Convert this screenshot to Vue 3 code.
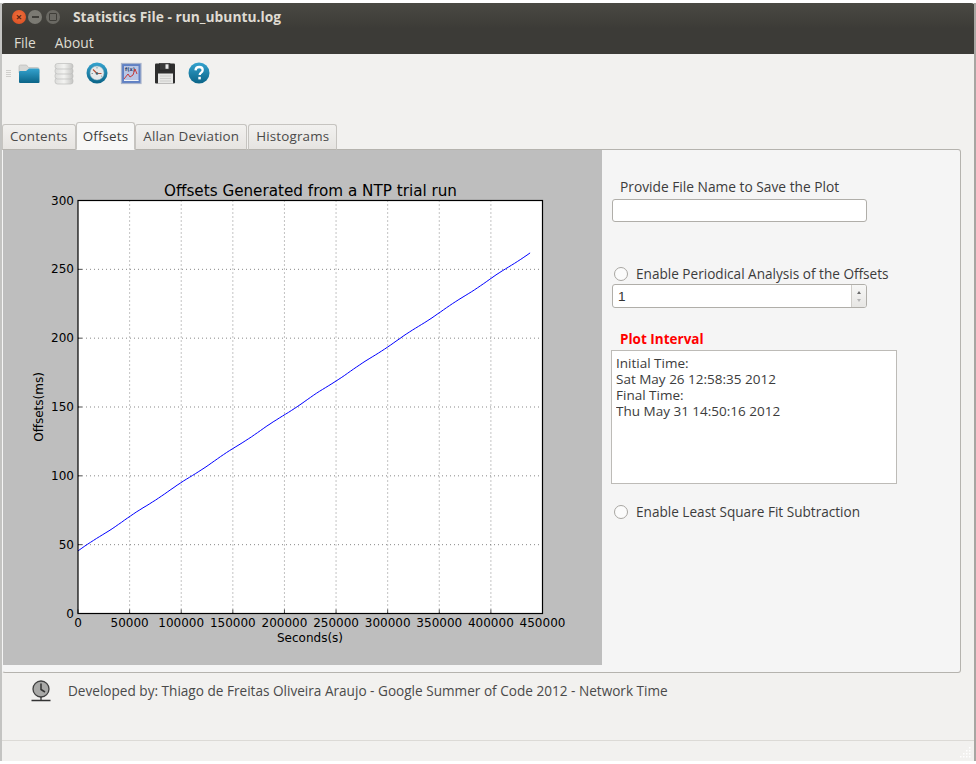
<template>
  <div class="window">
    <header class="titlebar">
      <div class="title-row">
        <div class="controls">
          <span class="ctl ctl-close">×</span>
          <span class="ctl ctl-min"><i class="dash"></i></span>
          <span class="ctl ctl-max"><i class="box"></i></span>
        </div>
        <div class="title">Statistics File - run_ubuntu.log</div>
      </div>
      <nav class="menu">
        <span class="menu-item">File</span>
        <span class="menu-item">About</span>
      </nav>
    </header>

    <div class="toolbar">
      <span class="grip"><i></i><i></i><i></i><i></i></span>
      <!-- folder -->
      <svg class="tool" width="24" height="24" viewBox="0 0 24 24">
        <defs>
          <linearGradient id="blue" x1="0" y1="0" x2="0" y2="1">
            <stop offset="0" stop-color="#35a3cf" />
            <stop offset="1" stop-color="#0b6487" />
          </linearGradient>
          <linearGradient id="silver" x1="0" y1="0" x2="1" y2="0">
            <stop offset="0" stop-color="#dcdcda" />
            <stop offset="0.5" stop-color="#f3f3f1" />
            <stop offset="1" stop-color="#c4c4c2" />
          </linearGradient>
        </defs>
        <path d="M2 5.500q0-1.500 1.500-1.500h6l2 2.500h9q1.500 0 1.500 1.500v4H2z" fill="#d8d8d6" stroke="#b5b5b3" stroke-width="0.6" />
        <path d="M2 11q0-1 1-1h6l3-2.500h9q1.500 0 1.500 1.500v12q0 1-1 1H3q-1 0-1-1z" fill="url(#blue)" />
      </svg>
      <!-- database -->
      <svg class="tool" width="24" height="24" viewBox="0 0 24 24">
        <g fill="url(#silver)" stroke="#bdbdbb" stroke-width="0.7">
          <rect x="4" y="17" width="18" height="6" rx="2.500" />
          <rect x="4" y="12" width="18" height="6" rx="2.500" />
          <rect x="4" y="7" width="18" height="6" rx="2.500" />
          <rect x="4" y="2.500" width="18" height="5.500" rx="2.500" />
        </g>
      </svg>
      <!-- clock -->
      <svg class="tool" width="24" height="24" viewBox="0 0 24 24">
        <circle cx="12" cy="12" r="10.500" fill="url(#blue)" />
        <circle cx="12" cy="12" r="7" fill="#e6e9ea" stroke="#8fb0bd" stroke-width="0.5" />
        <path d="M12 12.500L8 8.500M12 12.500h4.500" stroke="#b5533a" stroke-width="1.200" fill="none" />
        <circle cx="12" cy="12.500" r="1.300" fill="#44606c" />
        <path d="M12 6v1.500M6.500 12.500H8M17 15.500l-1-.7" stroke="#6f8791" stroke-width="0.8" />
      </svg>
      <!-- function plot -->
      <svg class="tool" width="24" height="24" viewBox="0 0 24 24">
        <rect x="2.500" y="2.500" width="19.500" height="20" fill="#5f80c4" stroke="#a9b4cb" stroke-width="1.200" />
        <rect x="5" y="5" width="14.500" height="15" fill="#b9c6e4" />
        <text x="6" y="10" class="fx">f(x)</text>
        <path d="M5 18l4-5 2 3 3-2 2-6 2 5" fill="none" stroke="#c73a3a" stroke-width="1" />
        <path d="M5 19.500h14.500" stroke="#f2f4f8" stroke-width="1" />
      </svg>
      <!-- floppy -->
      <svg class="tool" width="24" height="24" viewBox="0 0 24 24">
        <path d="M2 3.500q0-1 1-1h18q1 0 1 1v18q0 1-1 1H3q-1 0-1-1z" fill="#2e2e2e" />
        <rect x="6.500" y="2.500" width="10.500" height="6.500" fill="#3b3b3b" stroke="#222" stroke-width="0.4" />
        <rect x="12.500" y="3.300" width="3" height="4.500" fill="#e9e9e9" />
        <rect x="5" y="12.500" width="15" height="10" fill="#e7e7e5" />
        <path d="M7 15h11M7 17.500h11M7 20h11" stroke="#bdbdbb" stroke-width="0.6" />
      </svg>
      <!-- help -->
      <svg class="tool" width="24" height="24" viewBox="0 0 24 24">
        <circle cx="12" cy="12" r="10.500" fill="url(#blue)" />
        <path d="M8.500 9.300q.3-3.300 3.700-3.300 3.500 0 3.500 3 0 1.700-1.700 2.700-1.300.8-1.300 2.300" fill="none" stroke="#fff" stroke-width="2.300" />
        <rect x="11.300" y="15.800" width="2.500" height="2.600" fill="#fff" />
      </svg>
    </div>

    <div class="tabs">
      <div class="tab">Contents</div>
      <div class="tab active">Offsets</div>
      <div class="tab">Allan Deviation</div>
      <div class="tab">Histograms</div>
    </div>

    <section class="panel">
      <div class="plot">
        <svg class="chart" width="599" height="515" viewBox="0 0 599 515">
          <rect x="75" y="50.500" width="464.500" height="413" fill="#fff" />
          <g class="grid">
            <line v-for="t in xTicks.slice(1, -1)" :key="'gx' + t.label" :x1="t.x" :x2="t.x" y1="50.500" y2="463.500" />
            <line v-for="t in yTicks.slice(1, -1)" :key="'gy' + t.label" x1="75" x2="539.500" :y1="t.y" :y2="t.y" />
          </g>
          <polyline class="series" :points="seriesPoints" />
          <rect x="75" y="50.500" width="464.500" height="413" fill="none" stroke="#000" stroke-width="1.200" />
          <g class="ticks">
            <line v-for="t in xTicks" :key="'tx' + t.label" :x1="t.x" :x2="t.x" y1="463.500" y2="459.500" />
            <line v-for="t in yTicks" :key="'ty' + t.label" x1="75" x2="79" :y1="t.y" :y2="t.y" />
          </g>
          <text v-for="t in xTicks" :key="'lx' + t.label" :x="t.x" y="477" text-anchor="middle" class="tick-label">{{ t.label }}</text>
          <text v-for="t in yTicks" :key="'ly' + t.label" x="71" :y="t.y + 4" text-anchor="end" class="tick-label">{{ t.label }}</text>
          <text x="307.500" y="46" text-anchor="middle" class="chart-title">Offsets Generated from a NTP trial run</text>
          <text x="307" y="492" text-anchor="middle" class="tick-label">Seconds(s)</text>
          <text transform="translate(40 257) rotate(-90)" text-anchor="middle" class="tick-label">Offsets(ms)</text>
        </svg>
      </div>

      <div class="side">
        <div class="side-label file-label">Provide File Name to Save the Plot</div>
        <div class="field"></div>

        <label class="radio-row periodic">
          <span class="radio"></span>
          <span>Enable Periodical Analysis of the Offsets</span>
        </label>
        <div class="spin">
          <span class="spin-value">1</span>
          <span class="spin-btns">
            <i class="arrow up"></i>
            <i class="arrow down"></i>
          </span>
        </div>

        <div class="side-label red">Plot Interval</div>
        <div class="interval">
          <div v-for="line in intervalLines" :key="line" class="interval-line">{{ line }}</div>
        </div>

        <label class="radio-row least">
          <span class="radio"></span>
          <span>Enable Least Square Fit Subtraction</span>
        </label>
      </div>
    </section>

    <footer class="credits">
      <svg class="credit-icon" width="22" height="22" viewBox="0 0 22 22">
        <circle cx="11" cy="9" r="8" fill="#a9a9a7" stroke="#3f3f3f" stroke-width="1.300" />
        <path d="M11 3.500V9.500l4 2.500" fill="none" stroke="#333" stroke-width="1.500" />
        <path d="M11 17v3M1.500 20.500h19" stroke="#333" stroke-width="1.300" />
      </svg>
      <span>Developed by: Thiago de Freitas Oliveira Araujo - Google Summer of Code 2012 - Network Time</span>
    </footer>

    <div class="statusbar">
      <svg class="resize" width="12" height="12" viewBox="0 0 12 12">
        <g fill="#fff">
          <rect v-for="d in resizeDots" :key="d.x + '-' + d.y" :x="d.x" :y="d.y" width="1.500" height="1.500" />
        </g>
      </svg>
    </div>
  </div>
</template>

<script setup>
import { computed } from 'vue';

// Plot scale: axes box inside the grey area
const left = 75;
const bottom = 463.5;
const pxPerSecond = 464.5 / 450000;
const pxPerMs = 413 / 300;

const xTicks = Array.from({ length: 10 }, (_, i) => ({
  x: left + i * 50000 * pxPerSecond,
  label: String(i * 50000)
}));

const yTicks = Array.from({ length: 7 }, (_, i) => ({
  y: bottom - i * 50 * pxPerMs,
  label: String(i * 50)
}));

const seriesPoints = computed(() => {
  const points = [];
  for (let s = 0; s <= 438000; s += 3000) {
    const wobble = Math.sin(s / 7000) * 0.25;
    const ms = 45.5 + (s / 438000) * 216.5 + wobble;
    points.push(`${(left + s * pxPerSecond).toFixed(1)},${(bottom - ms * pxPerMs).toFixed(1)}`);
  }
  return points.join(' ');
});

const intervalLines = [
  'Initial Time:',
  'Sat May 26 12:58:35 2012',
  'Final Time:',
  'Thu May 31 14:50:16 2012'
];

const resizeDots = [
  { x: 9, y: 0 }, { x: 9, y: 3 }, { x: 6, y: 3 }, { x: 9, y: 6 },
  { x: 6, y: 6 }, { x: 3, y: 6 }, { x: 9, y: 9 }, { x: 6, y: 9 },
  { x: 3, y: 9 }, { x: 0, y: 9 }
];
</script>

<style scoped>
.window {
  box-sizing: border-box;
  width: 976px;
  height: 758px;
  margin-top: 3px;
  display: flex;
  flex-direction: column;
  background: #f2f1ef;
  border-left: 2px solid #c4c4c2;
  border-right: 2px solid #a8a6a2;
  font-family: "Open Sans", "Noto Sans", sans-serif;
  font-size: 13.6px;
  color: #3c3c3c;
  overflow: hidden;
}

.titlebar {
  height: 51px;
  flex: none;
  margin-left: -2px;
  margin-right: -2px;
  background: linear-gradient(#4a4943, #3c3b37 50%);
  border-radius: 5px 5px 0 0;
}

.title-row {
  height: 27px;
  display: flex;
  align-items: center;
}

.controls {
  display: flex;
  align-items: center;
  width: 73px;
  padding-left: 12px;
  box-sizing: border-box;
  gap: 2px;
}

.ctl {
  width: 14px;
  height: 14px;
  border-radius: 50%;
  display: flex;
  align-items: center;
  justify-content: center;
  font-size: 11px;
  line-height: 1;
  font-weight: 700;
}

.ctl-close {
  background: radial-gradient(circle at 50% 40%, #f0703d, #d84a1f);
  color: #5e2510;
}

.ctl-min {
  background: #7b7a73;
}

.ctl-max {
  background: #6a6963;
  margin-left: 2px;
}

.dash {
  display: block;
  width: 7px;
  height: 2px;
  background: #3f3e39;
}

.box {
  display: block;
  width: 6px;
  height: 6px;
  border: 1px solid #3f3e39;
  border-radius: 1px;
}

.title {
  font-weight: 700;
  font-size: 13.8px;
  color: #dfdbd2;
}

.menu {
  height: 24px;
  display: flex;
  align-items: center;
  gap: 19px;
  padding-left: 14px;
  font-size: 13.8px;
}

.menu-item {
  color: #dfdbd2;
}

.toolbar {
  height: 69px;
  flex: none;
  box-sizing: border-box;
  padding: 7px 0 0 2px;
  display: flex;
  align-items: flex-start;
  gap: 10px;
}

.grip {
  display: flex;
  flex-direction: column;
  gap: 1px;
  width: 5px;
  margin: 9px -4px 0 2px;
}

.grip i {
  display: block;
  height: 1px;
  background: #d0cfcc;
}

.tool {
  flex: none;
}

.fx {
  font-family: "DejaVu Sans", sans-serif;
  font-size: 5px;
  font-weight: 700;
  fill: #2d3f66;
}

.tabs {
  display: flex;
  align-items: flex-end;
  height: 27px;
  flex: none;
  position: relative;
  z-index: 1;
  margin-bottom: -1px;
  font-size: 13.4px;
  letter-spacing: 0.16px;
}

.tab {
  box-sizing: border-box;
  height: 26px;
  padding: 0 7px 2px;
  margin-right: 1px;
  display: flex;
  align-items: center;
  background: linear-gradient(#f2f1ef, #e6e4e1);
  border: 1px solid #c6c4c0;
  border-bottom-color: #b5b3ae;
  border-radius: 3px 3px 0 0;
  white-space: nowrap;
  color: #4a4a4a;
}

.tab.active {
  height: 28px;
  background: #f7f7f6;
  border-bottom-color: #f7f7f6;
  padding: 0 6px 1px;
  margin-right: 0;
  margin-left: -1px;
  color: #3c3c3c;
}

.panel {
  box-sizing: border-box;
  width: 959px;
  height: 524px;
  flex: none;
  display: flex;
  align-items: flex-start;
  background: #f5f5f5;
  border: 1px solid #b5b3ae;
  border-left-color: #f5f5f5;
  border-radius: 0 3px 3px 3px;
}

.plot {
  flex: none;
  width: 599px;
  height: 515px;
  background: #bebebe;
}

.chart {
  display: block;
}

.grid line {
  stroke: #555;
  stroke-width: 0.7;
  stroke-dasharray: 1 3;
}

.series {
  fill: none;
  stroke: #0000ff;
  stroke-width: 1;
}

.ticks line {
  stroke: #000;
  stroke-width: 0.7;
}

.tick-label {
  font-family: "DejaVu Sans", sans-serif;
  font-size: 12px;
  fill: #000;
}

.chart-title {
  font-family: "DejaVu Sans", sans-serif;
  font-size: 15.2px;
  fill: #000;
}

.side {
  flex: none;
  width: 340px;
  padding-left: 9px;
  display: flex;
  flex-direction: column;
  align-items: flex-start;
}

.side-label {
  padding-left: 9px;
  line-height: 18px;
}

.file-label {
  margin-top: 28px;
  font-size: 13.75px;
}

.red {
  margin-top: 22px;
  color: #f00;
  font-weight: 700;
  font-size: 13.5px;
}

.field,
.spin {
  box-sizing: border-box;
  width: 255px;
  margin-left: 1px;
  background: #fff;
  border: 1px solid #b0aea9;
  border-radius: 3px;
}

.field {
  height: 23px;
  margin-top: 3px;
}

.radio-row {
  display: flex;
  align-items: center;
  gap: 8px;
  padding-left: 3px;
  line-height: 18px;
}

.periodic {
  margin-top: 43px;
}

.least {
  margin-top: 19px;
}

.radio {
  box-sizing: border-box;
  width: 14px;
  height: 14px;
  border-radius: 50%;
  background: #fbfbfb;
  border: 1px solid #a8a6a2;
}

.spin {
  height: 24px;
  margin-top: 1px;
  display: flex;
  align-items: center;
  justify-content: space-between;
  overflow: hidden;
}

.spin-value {
  padding-left: 5px;
  color: #333;
  font-family: "Liberation Sans", sans-serif;
}

.spin-btns {
  width: 14px;
  height: 100%;
  display: flex;
  flex-direction: column;
  align-items: center;
  justify-content: center;
  gap: 5px;
  background: linear-gradient(#f7f7f6, #e7e6e4);
  border-left: 1px solid #cfcdc9;
}

.arrow {
  width: 0;
  height: 0;
  border-left: 2.5px solid transparent;
  border-right: 2.5px solid transparent;
}

.arrow.up {
  border-bottom: 3px solid #6b6b6b;
}

.arrow.down {
  border-top: 3px solid #b5b5b5;
}

.interval {
  box-sizing: border-box;
  width: 286px;
  height: 134px;
  margin-top: 2px;
  padding: 4px;
  background: #fff;
  border: 1px solid #bdbbb7;
  font-size: 13.5px;
}

.interval-line {
  height: 16px;
  line-height: 16px;
  overflow: hidden;
}

.credits {
  height: 35px;
  flex: none;
  display: flex;
  align-items: center;
  gap: 16px;
  padding: 0 0 0 28px;
  box-sizing: border-box;
  color: #4a4a4a;
}

.credit-icon {
  flex: none;
}

.statusbar {
  margin-top: 32px;
  flex: 1;
  border-top: 1px solid #dcdad6;
  position: relative;
}

.resize {
  position: absolute;
  right: 2px;
  bottom: 2px;
}
</style>
